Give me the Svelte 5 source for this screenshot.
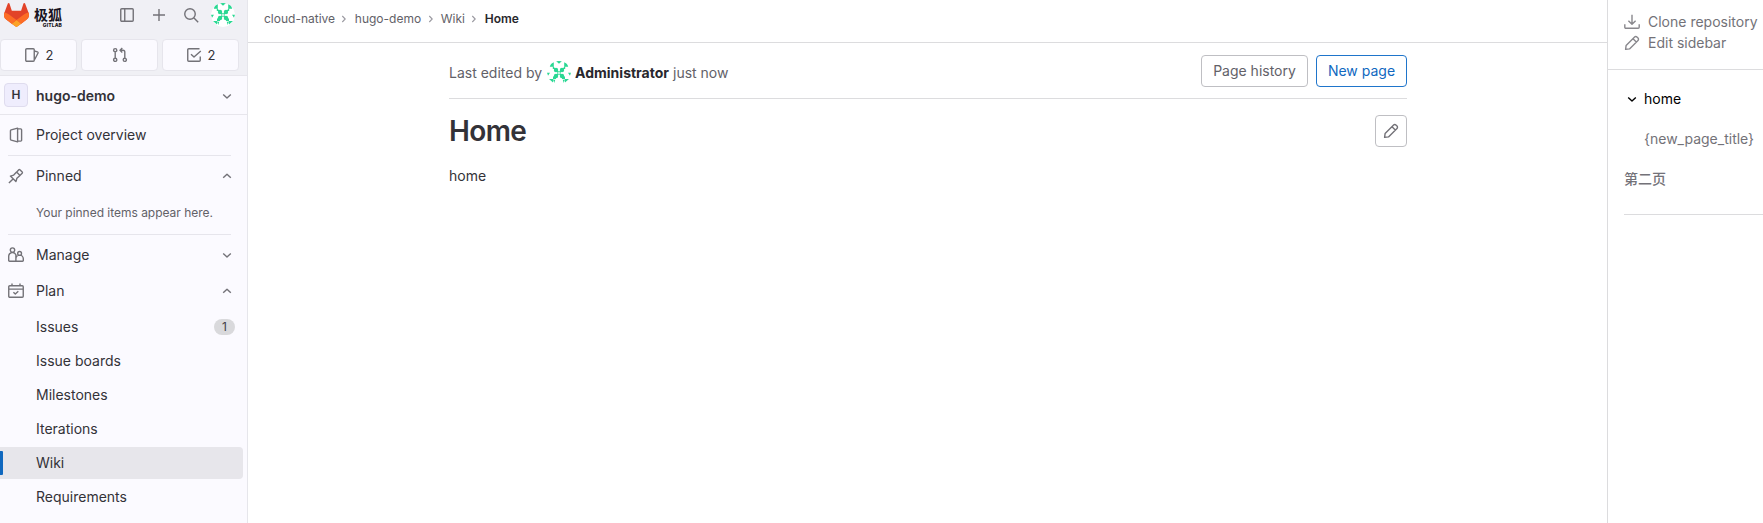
<script>
  const plan = [
    { label: 'Issues', count: 1 },
    { label: 'Issue boards' },
    { label: 'Milestones' },
    { label: 'Iterations' },
    { label: 'Wiki', active: true },
    { label: 'Requirements' }
  ];
  const crumbs = ['cloud-native', 'hugo-demo', 'Wiki'];
  const icons = {
    panel: 'M2.75 1.75h10.5a1 1 0 0 1 1 1v10.5a1 1 0 0 1-1 1H2.75a1 1 0 0 1-1-1V2.75a1 1 0 0 1 1-1zM5.75 2v12',
    plus: 'M8 2v12M2 8h12',
    search: 'M12.25 7A5.25 5.25 0 1 1 1.75 7a5.25 5.25 0 0 1 10.5 0zM11 11l4.2 4.2',
    issues: 'M2.75 1.75h6.5a1 1 0 0 1 1 1v10.5a1 1 0 0 1-1 1h-6.5a1 1 0 0 1-1-1V2.75a1 1 0 0 1 1-1zM10.5 4l2.9 .8a1 1 0 0 1 .65 1.25L10.7 12.5',
    merge: 'M4.8 3.2a1.6 1.6 0 1 1-3.2 0 1.6 1.6 0 0 1 3.2 0zM4.8 12.8a1.6 1.6 0 1 1-3.2 0 1.6 1.6 0 0 1 3.2 0zM14.4 12.8a1.6 1.6 0 1 1-3.2 0 1.6 1.6 0 0 1 3.2 0zM3.2 5v6M12.8 11V5a1.8 1.8 0 0 0-1.8-1.8H8.5M10.3 1L8 3.2l2.3 2.3',
    todo: 'M13.5 1.75H2.75a1 1 0 0 0-1 1v10.5a1 1 0 0 0 1 1h10.5a1 1 0 0 0 1-1V9.5M5 7.2l3 2.9 6.8-6.2',
    project: 'M9.6 1.1L3.2 2.9a1 1 0 0 0-.75.95v8.3a1 1 0 0 0 .75.95l6.4 1.8zM9.6 1.9h3.1a.9.9 0 0 1 .9.9v10.4a.9.9 0 0 1-.9.9H9.6',
    pin: 'M.9 15.1l4.4-4.4M2.4 8.1l5.5 5.5 1-3.3 3.1-2.8-3.4-3.5-2.9 3.1zM8.8 3.9l2-2.1a.8.8 0 0 1 1.1 0l2.3 2.3a.8.8 0 0 1 0 1.1l-2.1 2.1',
    manage: 'M6.7 3.1a2.2 2.2 0 1 1-4.4 0 2.2 2.2 0 0 1 4.4 0zM7.9 14.3H1.6a.9.9 0 0 1-.9-.9V9.2a3.8 3.8 0 0 1 7.2-1.5zM13.5 6.4a1.9 1.9 0 1 1-3.8 0 1.9 1.9 0 0 1 3.8 0zM8.7 14.3a.8.8 0 0 1-.8-.8v-1.7a3.7 3.7 0 0 1 7.4 0v1.7a.8.8 0 0 1-.8.8z',
    plan: 'M1.75 2.75h12.5a1 1 0 0 1 1 1v9.5a1 1 0 0 1-1 1H1.75a1 1 0 0 1-1-1v-9.5a1 1 0 0 1 1-1zM.8 6.1h14.4M4 .6v3M12 .6v3M5.4 9.3l1.9 1.8 3-2.8',
    pencil: 'M1.6 14.4l.5-3.9L10.6 2a1.6 1.6 0 0 1 2.3 0l1.1 1.1a1.6 1.6 0 0 1 0 2.3l-8.5 8.5zM9 3.7L12.3 7',
    download: 'M8 .8v9.4M4.4 6.8L8 10.3l3.6-3.5M.8 10.3v2.9a1 1 0 0 0 1 1h12.4a1 1 0 0 0 1-1v-2.9',
    down: 'M4.2 6.4L8 10l3.8-3.6',
    up: 'M4.2 9.8L8 6.2l3.8 3.6'
  };
</script>

{#snippet icon(name, size = 16)}
  <svg class="icon" width={size} height={size} viewBox="0 0 16 16"><path d={icons[name]} /></svg>
{/snippet}

{#snippet avatar()}
  <svg class="avatar" width="24" height="24" viewBox="0 0 24 24">
    <circle cx="12" cy="12" r="12" fill="#fff" />
    <g fill="#2ad893">
      <path d="M9 0h6l-3 2.8zM0 11.8h3l-2 3zM24 11.8h-3l2 3zM4.2 1.8L6.8 1v4.8H2.8zM19.8 1.8L17.2 1v4.8h4zM5.8 5l3 3h-3zM18.2 5l-3 3h3z" />
      <path d="M9 15l-3 .5v3l3-.4zM15 15l3 .5v3l-3-.4zM2 18h4v3.5zM22 18h-4v3.5zM6.2 19h2l-1 3zM17.8 19h-2l1 3z" />
      <circle cx="9" cy="9" r="2.2" /><circle cx="15" cy="9" r="2.2" />
      <circle cx="9" cy="15" r="2.2" /><circle cx="15" cy="15" r="2.2" />
      <path d="M8.6 9.8L9.8 8.6l5.6 5.6-1.2 1.2zM15.4 9.8l-1.2-1.2-5.6 5.6 1.2 1.2z" />
    </g>
  </svg>
{/snippet}

<div class="page">
  <aside class="sidebar">
    <div class="top">
      <div class="brandrow">
        <svg class="logo" width="25" height="24" viewBox="0 0 25 24">
          <path fill="#E24329" d="m24.507 9.5-.034-.09L21.082.562a.896.896 0 0 0-1.694.091l-2.29 7.01H7.825L5.535.653a.898.898 0 0 0-1.694-.09L.451 9.411.416 9.5a6.297 6.297 0 0 0 2.09 7.278l5.202 3.899 4.758 3.323 4.742-3.323 5.197-3.89A6.297 6.297 0 0 0 24.507 9.5Z" />
          <path fill="#FC6D26" d="m24.507 9.5-.034-.09a11.44 11.44 0 0 0-4.56 2.051l-7.447 5.632 4.742 3.584 5.197-3.89.014-.01A6.297 6.297 0 0 0 24.507 9.5Z" />
          <path fill="#FCA326" d="m7.707 20.677 2.56 1.935 1.555 1.176a1.051 1.051 0 0 0 1.268 0l1.555-1.176 2.56-1.935-4.743-3.584-4.755 3.584Z" />
          <path fill="#FC6D26" d="M5.01 11.461a11.43 11.43 0 0 0-4.56-2.05L.416 9.5a6.297 6.297 0 0 0 2.09 7.278l.012.01.03.022 5.16 3.867 4.745-3.584-7.444-5.632Z" />
        </svg>
        <div class="wordmark"><b>极狐</b><span>GITLAB</span></div>
        <div class="tools">
          {@render icon('panel')}{@render icon('plus')}{@render icon('search')}{@render avatar()}
        </div>
      </div>
      <div class="counters">
        <button>{@render icon('issues')}<span>2</span></button>
        <button>{@render icon('merge')}</button>
        <button>{@render icon('todo')}<span>2</span></button>
      </div>
    </div>
    <div class="context">
      <span class="letter">H</span><strong>hugo-demo</strong>{@render icon('down')}
    </div>
    <nav>
      <div class="item">{@render icon('project')}<span>Project overview</span></div>
      <hr />
      <div class="item pinned">{@render icon('pin')}<span>Pinned</span>{@render icon('up')}</div>
      <p class="hint">Your pinned items appear here.</p>
      <hr />
      <div class="item">{@render icon('manage')}<span>Manage</span>{@render icon('down')}</div>
      <div class="item">{@render icon('plan')}<span>Plan</span>{@render icon('up')}</div>
      <ul>
        {#each plan as p}
          <li class:active={p.active}><span>{p.label}</span>{#if p.count}<em>{p.count}</em>{/if}</li>
        {/each}
      </ul>
    </nav>
  </aside>

  <main>
    <header class="crumbs">
      {#each crumbs as c}
        <span>{c}</span><svg width="8" height="8" viewBox="0 0 8 8"><path d="M2.3 1L5.2 4 2.3 7" /></svg>
      {/each}
      <strong>Home</strong>
    </header>
    <div class="content">
      <div class="meta">
        <span>Last edited by</span>{@render avatar()}<strong>Administrator</strong><span>just now</span>
        <div class="actions">
          <button class="btn history">Page history</button>
          <button class="btn new">New page</button>
        </div>
      </div>
      <div class="title">
        <h1>Home</h1>
        <button class="btn edit" aria-label="Edit">{@render icon('pencil')}</button>
      </div>
      <p class="body">home</p>
    </div>
  </main>

  <aside class="right">
    <div class="links">
      <div>{@render icon('download')}<span>Clone repository</span></div>
      <div>{@render icon('pencil')}<span>Edit sidebar</span></div>
    </div>
    <div class="tree">
      <div class="open">{@render icon('down')}<span>home</span></div>
      <div class="child">{'{new_page_title}'}</div>
      <div class="cjk">第二页</div>
    </div>
  </aside>
</div>

<style>
  :global(body) { background: #fff; overflow: hidden; }
  .page { display: flex; height: 523px; overflow: hidden; font: 14px/20px Inter, "Noto Sans CJK SC", sans-serif; color: #333238; }
  .page, .page * { box-sizing: border-box; }
  svg { display: block; flex: none; }
  .icon { fill: none; stroke: #737278; stroke-width: 1.4; stroke-linejoin: round; }
  .avatar { border-radius: 50%; }
  button { font: inherit; color: inherit; padding: 0; margin: 0; }

  .sidebar { width: 248px; flex: none; background: #fbfaff; border-right: 1px solid #e6e6eb; }
  .top { height: 76px; background: #f0f0f5; border-bottom: 1px solid #e7e6ec; }
  .brandrow { display: flex; height: 39px; padding: 3px 12px 0 4px; align-items: flex-start; }
  .wordmark { width: 28px; margin: 4px 0 0 5px; color: #171321; text-align: right; }
  .wordmark b { display: block; font: 700 14px/15px "Noto Sans CJK SC", sans-serif; height: 15px; }
  .wordmark span { display: block; font: 800 5px/5px Inter, sans-serif; letter-spacing: 0.1px; margin-top: 1px; }
  .tools { margin-left: auto; display: flex; align-items: center; gap: 16px; height: 24px; }
  .tools .avatar { margin-left: -4px; }
  .counters { display: flex; gap: 4px; }
  .counters button { display: flex; align-items: center; justify-content: center; gap: 6px; width: 77px; height: 32px; background: #fbfaff; border: 1px solid #e6e5ec; border-radius: 4px; }
  .counters span { font-size: 13px; }
  .context { height: 39px; display: flex; align-items: center; padding: 0 12px 0 4px; border-bottom: 1px solid #e7e6ec; }
  .context strong { flex: 1; font-weight: 600; margin-left: 8px; padding-top: 2px; }
  .context .icon { margin-top: 2px; }
  .letter { width: 24px; height: 24px; border: 1px solid #dfdcee; background: #efedfd; border-radius: 4px; text-align: center; font-weight: 600; font-size: 12px; line-height: 22px; }
  nav { padding-top: 4px; }
  .item { height: 32px; margin-bottom: 4px; display: flex; align-items: center; padding: 0 12px 0 8px; }
  .item span { flex: 1; margin-left: 12px; }
  .item.pinned { margin-bottom: 0; }
  hr { border: 0; border-top: 1px solid #e6e5ec; margin: 0 16px 4px 8px; }
  .hint { margin: 0; font-size: 12px; line-height: 16px; height: 42px; padding: 13px 0 0 36px; color: #626168; letter-spacing: -0.02px; }
  ul { list-style: none; margin: 0; padding: 0 4px 0 0; }
  li { display: flex; height: 32px; margin-bottom: 2px; align-items: center; padding: 0 8px 0 36px; border-radius: 0 4px 4px 0; }
  li span { flex: 1; }
  li.active { background: #e7e6eb; }
  li.active::before { content: ""; width: 3px; height: 24px; margin: 0 33px 0 -36px; background: #1068bf; border-radius: 0 1px 1px 0; }
  li em { width: 21px; height: 16px; border-radius: 8px; background: #d9d9dc; font-style: normal; font-size: 12px; line-height: 16px; text-align: center; color: #434248; }

  main { flex: 1; min-width: 0; }
  .crumbs { height: 43px; border-bottom: 1px solid #dcdcde; display: flex; align-items: center; padding: 0 0 5px 16px; font-size: 12px; color: #626168; }
  .crumbs svg { margin: 0 6.3px 0 5.4px; fill: none; stroke: #9a99a0; stroke-width: 1.1; }
  .crumbs strong { font-weight: 600; color: #28272d; }
  .content { width: 958px; margin-left: 201px; }
  .meta { height: 56px; display: flex; align-items: center; border-bottom: 1px solid #dcdcde; padding-top: 4px; color: #626168; }
  .meta .avatar { margin: 0 4px 0 5px; }
  .meta strong { font-weight: 700; color: #28272d; margin-right: 4px; }
  .actions { display: flex; gap: 8px; margin: -3px 0 0 auto; }
  .btn { height: 32px; border-radius: 4px; border: 1px solid #bfbfc3; background: #fff; display: flex; align-items: center; justify-content: center; }
  .history { width: 107px; }
  .new { width: 91px; border-color: #1f75cb; color: #1068bf; }
  .title { display: flex; justify-content: space-between; align-items: center; padding-top: 16px; }
  h1 { margin: 0; font-size: 28px; line-height: 32px; font-weight: 600; letter-spacing: -0.6px; }
  .edit { width: 32px; }
  .body { margin: 19px 0 0; }

  .right { width: 156px; flex: none; border-left: 1px solid #dcdcde; color: #737278; white-space: nowrap; }
  .links { height: 70px; padding: 12px 0 0 16px; border-bottom: 1px solid #dcdcde; }
  .links div { display: flex; align-items: center; height: 20px; gap: 8px; }
  .links div + div { margin-top: 1px; }
  .right .icon { stroke: #89888d; }
  .tree { margin-left: 16px; height: 145px; border-bottom: 1px solid #dcdcde; padding-top: 9px; }
  .tree div { height: 40px; display: flex; align-items: center; }
  .tree .open { color: #000; gap: 4px; }
  .tree .open :global(.icon) { stroke: #000; }
  .tree .child { padding-left: 20px; }
  .tree .cjk { font-weight: 500; }
</style>
